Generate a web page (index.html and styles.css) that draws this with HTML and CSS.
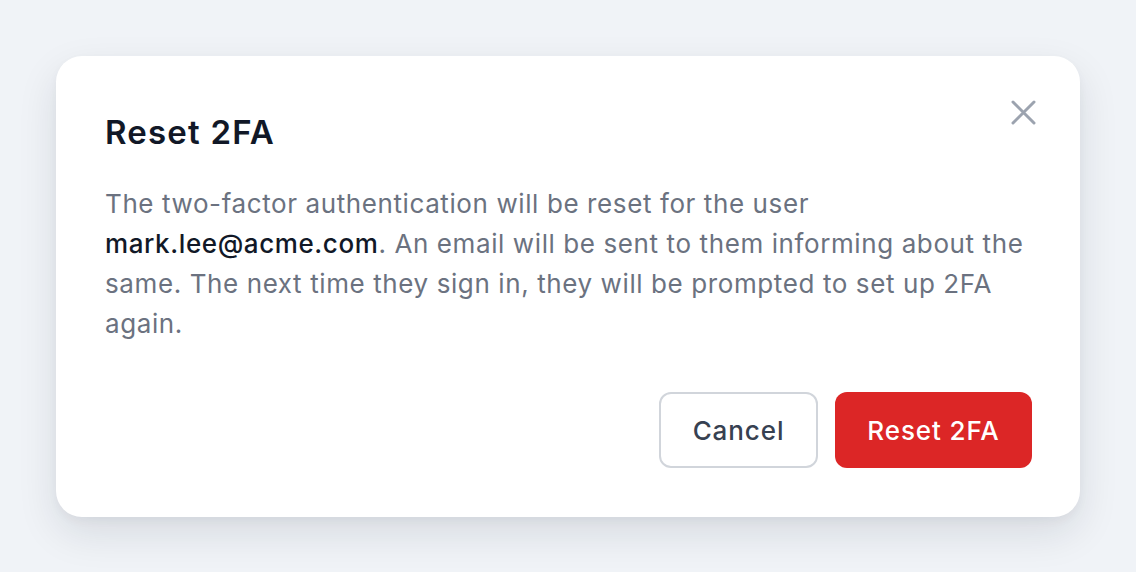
FILE: index.html
```html
<!DOCTYPE html>
<html lang="en">
<head>
    <meta charset="UTF-8">
    <meta name="viewport" content="width=device-width, initial-scale=1.0">
    <title>Reset 2FA</title>
    <link rel="stylesheet" href="styles.css">
</head>
<body>

    <div class="modal">
        <button class="close-btn" aria-label="Close">
            <svg width="25" height="25" viewBox="0 0 25 25" fill="none" stroke="currentColor" stroke-width="3" stroke-linecap="round">
                <path d="M2 2L23 23M23 2L2 23"/>
            </svg>
        </button>
        <h1 class="modal-title">Reset 2FA</h1>
        <p class="modal-text">
            The two-factor authentication will be reset for the user
            <strong>mark.lee@acme.com</strong>. An email will be sent to them informing about the
            same. The next time they sign in, they will be prompted to set up 2FA
            again.
        </p>
        <div class="actions">
            <button class="btn btn-cancel">Cancel</button>
            <button class="btn btn-danger">Reset 2FA</button>
        </div>
    </div>

</body>
</html>
```

FILE: styles.css
```css
body {
    margin: 0;
    background-color: #f0f3f7;
    font-family: Inter, "Noto Sans", sans-serif;
    padding: 56px;
}
.modal {
    position: relative;
    background: #ffffff;
    border-radius: 26px;
    padding: 48px 48px 49px 49px;
    box-shadow: 0 16px 40px rgba(15, 23, 42, 0.11), 0 4px 10px rgba(15, 23, 42, 0.04);
}
.close-btn {
    position: absolute;
    top: 44px;
    right: 44px;
    background: none;
    border: none;
    padding: 0;
    color: #9ca3af;
    cursor: pointer;
    display: flex;
}
.modal-title {
    margin: 0;
    font-size: 33px;
    line-height: 56px;
    font-weight: 600;
    letter-spacing: 1.2px;
    color: #111827;
}
.modal-text {
    margin: 24px 0 0;
    font-size: 26px;
    line-height: 40px;
    letter-spacing: 0.6px;
    color: #6b7280;
}
.modal-text strong {
    font-weight: 500;
    color: #111827;
}
.actions {
    display: flex;
    justify-content: flex-end;
    gap: 17px;
    margin-top: 48px;
}
.btn {
    font-family: inherit;
    font-size: 26px;
    font-weight: 500;
    letter-spacing: 0.9px;
    height: 76px;
    border-radius: 12px;
    cursor: pointer;
}
.btn-cancel {
    width: 159px;
    background: #ffffff;
    color: #374151;
    border: 2px solid #d1d5db;
}
.btn-danger {
    width: 197px;
    background: #dc2626;
    color: #ffffff;
    border: none;
}
```
